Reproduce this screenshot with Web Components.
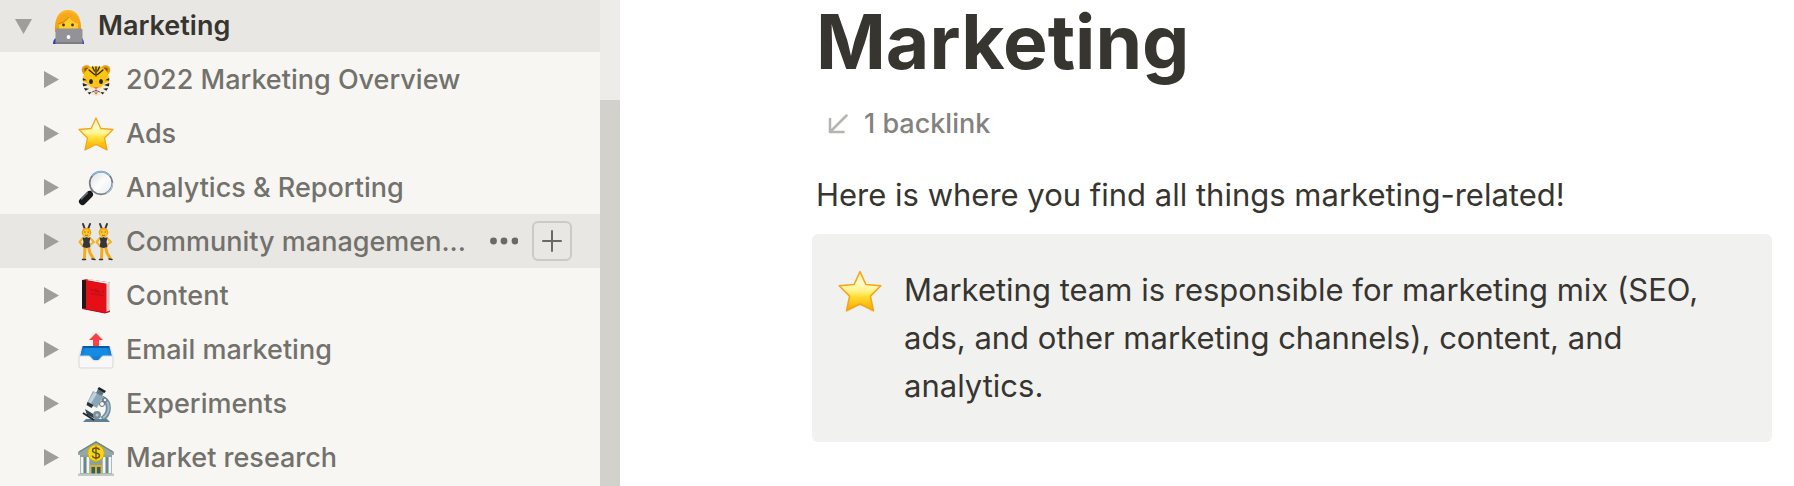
<!DOCTYPE html>
<html lang="en">
<head>
<meta charset="utf-8">
<meta name="viewport" content="width=device-width, initial-scale=1">
<title>Marketing</title>
<style>
  html, body { margin: 0; height: 100%; }
  body { font-family: Inter, "Liberation Sans", sans-serif; color: #37352f; background: #fff; }
</style>
</head>
<body>
<workspace-app>
  <side-bar slot="sidebar">
    <page-row top open icon="technologist">Marketing</page-row>
    <page-row icon="tiger">2022 Marketing Overview</page-row>
    <page-row icon="star">Ads</page-row>
    <page-row icon="magnifier">Analytics &amp; Reporting</page-row>
    <page-row icon="dancers" active>Community managemen...</page-row>
    <page-row icon="book">Content</page-row>
    <page-row icon="outbox">Email marketing</page-row>
    <page-row icon="microscope">Experiments</page-row>
    <page-row icon="bank">Market research</page-row>
  </side-bar>
  <page-document>
    <span slot="title">Marketing</span>
    <span slot="backlinks">1 backlink</span>
    <text-block>Here is where you find all things marketing-related!</text-block>
    <callout-block icon="star">Marketing team is responsible for marketing mix (SEO, ads, and other marketing channels), content, and analytics.</callout-block>
  </page-document>
</workspace-app>

<script>
const art = {
  technologist: `
    <defs><linearGradient id="h" x1="0" y1="0" x2="0" y2="1"><stop offset="0" stop-color="#fdb827"/><stop offset="1" stop-color="#ef9a0c"/></linearGradient></defs>
    <path d="M5 24C4 10 9 2 18 2s14 8 13 22z" fill="url(#h)"/>
    <path d="M3 36c0-3 1-5 3-6h26c1 1 2 3 2 6z" fill="#2b39c4"/>
    <path d="M9 16c5-1 9-4 10-7 2 3 5 5 9 6v8H9z" fill="#ffcf2e"/>
    <path d="M8 17c5-1 9-4 11-8 2 3 5 6 10 7-1-6-4-11-11-11S7 9 8 17z" fill="#f6a81a"/>
    <path d="M19 9q-5 6-11 7" stroke="#c97d08" stroke-width=".8" fill="none"/>
    <circle cx="13.500" cy="17" r="1.400" fill="#503008"/><circle cx="22.500" cy="17" r="1.400" fill="#503008"/>
    <rect x="5.500" y="20.500" width="27" height="15.500" rx="1.500" fill="#929297"/><path d="M5.500 34h27v2h-27z" fill="#7c7c82"/>
    <circle cx="18.500" cy="29" r="1.900" fill="#fff"/>`,
  tiger: `
    <circle cx="8.500" cy="9" r="4.800" fill="#e89b10"/><circle cx="27.500" cy="9" r="4.800" fill="#e89b10"/>
    <circle cx="8.500" cy="9" r="2.400" fill="#8a5a10"/><circle cx="27.500" cy="9" r="2.400" fill="#8a5a10"/>
    <path d="M18 5c8 0 12 5 13 12 1 9-5 17-13 17S4 26 5 17C6 10 10 5 18 5z" fill="#fcc413"/>
    <path d="M4.700 21c4 0 6 3 8.500 5.500l4.800.5 4.800-.5c2.500-2.500 4.500-5.500 8.500-5.500 0 6-4 10-7.500 12L18 35.500 12.200 33c-3.500-2-7.500-6-7.500-12z" fill="#f3ead8"/>
    <path d="M18 6v9M14.500 6l2 4M21.500 6l-2 4M11 9l5.500 4.500M25 9l-5.500 4.500" stroke="#2a2410" stroke-width="1.300" fill="none" stroke-linecap="round"/>
    <path d="M4.800 17l4.200 2.200-4.200.3zM4.600 22l5.400 2-4.800 1.500zM6 27l5 .8-3.600 2zM9.500 31.500l4-.5-2 2.500zM31.200 17L27 19.200l4.200.3zM31.400 22L26 24l4.800 1.500zM30 27l-5 .8 3.600 2zM26.500 31.500l-4-.5 2 2.500z" fill="#222"/>
    <ellipse cx="13" cy="20.500" rx="1.900" ry="2.500" fill="#222"/><ellipse cx="23" cy="20.500" rx="1.900" ry="2.500" fill="#222"/>
    <path d="M15.500 26h5L18 28.800z" fill="#e8707f"/><path d="M14 31q4-3 8 0M18 29v1.500" stroke="#554" stroke-width=".9" fill="none"/><path d="M16 31.500h4l-2 2z" fill="#d84a54"/>`,
  star: `
    <defs><linearGradient id="s" x1="0" y1="0" x2="0" y2="1"><stop offset="0" stop-color="#fff3b0"/><stop offset=".3" stop-color="#fffbc4"/><stop offset=".48" stop-color="#fff48e"/><stop offset=".65" stop-color="#ffdc2e"/><stop offset="1" stop-color="#fca500"/></linearGradient></defs>
    <path d="M18 3l4.800 10.500L35 14.500l-8.500 8.500L29 35l-11-5.500L7 35l2.500-12L1 14.500l12.200-1z" fill="url(#s)" stroke="#f6a519" stroke-width="1.300" stroke-linejoin="round"/>`,
  magnifier: `
    <defs><linearGradient id="m" x1="0" y1="0" x2="1" y2="1"><stop offset="0" stop-color="#dcdcdd"/><stop offset=".5" stop-color="#fdfdfd"/><stop offset="1" stop-color="#e6e8ea"/></linearGradient></defs>
    <path d="M12 24l4-4" stroke="#8b9094" stroke-width="3"/>
    <path d="M4.500 32.500l7-7" stroke="#17191b" stroke-width="7" stroke-linecap="round"/><path d="M3.500 30l6-6" stroke="#717679" stroke-width="1.300" stroke-linecap="round"/>
    <circle cx="23" cy="14" r="11.300" fill="url(#m)" stroke="#777d85" stroke-width="1.700"/>
    <path d="M14 6.500A12 12 0 0 1 32 7" stroke="#8db9e8" stroke-width="1.500" fill="none"/><path d="M34.500 14A11.500 11.500 0 0 1 28 24.500" stroke="#a9bfd8" stroke-width="1.300" fill="none"/>`,
  dancers: `
    <g id="d"><path d="M5 1l1.500 4M12 1l-1.500 4" stroke="#33363d" stroke-width="2" stroke-linecap="round"/>
    <circle cx="8.500" cy="9.500" r="4.800" fill="#efa012"/><ellipse cx="8.500" cy="10" rx="3.500" ry="3.800" fill="#ffc629"/>
    <path d="M6 9h1.500M9.500 9H11M7 12q1.500 1 3 0" stroke="#a0620e" stroke-width=".9" fill="none"/>
    <path d="M5 15l-3.500 4 3.500 4M12 15l4 4-4 3" stroke="#f5b21c" stroke-width="2" fill="none" stroke-linejoin="round"/>
    <path d="M7 24L6.500 35M10.500 24l1.500 6 3 5" stroke="#f5aa18" stroke-width="3" fill="none" stroke-linecap="round"/>
    <path d="M4.500 14q2 1.500 4 0 2 1.500 4 0l-1 5 1 5-4 1-4-1 1-5z" fill="#35363c"/>
    <path d="M4.500 36.500h3M14 36l3 .5" stroke="#333" stroke-width="1.500" stroke-linecap="round"/></g><use href="#d" x="17"/>`,
  book: `
    <path d="M4 3l5-1 23 3.500v29L27 36 4 31.500z" fill="#a5131a"/>
    <path d="M8 3l3-1 21 3.500-2.500 1.500z" fill="#ece9e6"/><path d="M28 6.500l4-1v28l-4 1.500z" fill="#dedad8"/><path d="M30 7v26" stroke="#a9a5a3" stroke-width=".7"/>
    <path d="M4 3l4 .6V32l-4-1z" fill="#241617"/><path d="M8 3.600L28.500 7v29L8 32z" fill="#e50f17"/>
    <path d="M12 11.500l2 2.500 1.500-2M17 12.500l2 .5v2h-2zM20.500 13v2.500h2M25 13.500v3M12.500 16.500l13 2" stroke="#9e1117" stroke-width=".7" fill="none"/><path d="M4 31.500L27 36l5-1.500" stroke="#b80f18" fill="none"/>`,
  outbox: `
    <path d="M4 15h28l2 10v4H2v-4z" fill="#177ed2"/><path d="M4 15h28l1 6-2-4H5l-2 4z" fill="#0759a3"/><path d="M7 17h22l2 8H5z" fill="#168be4"/>
    <path d="M18 2l7 7h-4v6h-6V9h-4z" fill="#fb3f48"/>
    <path d="M1 25h10c2 0 3 5 7 5s5-5 7-5h10v10q0 2-2 2H3q-2 0-2-2z" fill="#f8f8f8" stroke="#d7d7d7"/><path d="M1 25l3-10M35 25l-3-10" stroke="#e7e7e7" stroke-width="1.500"/>`,
  microscope: `
    <path d="M24 13c9 4 8 16 0 21" stroke="#708b9d" stroke-width="5" fill="none"/><path d="M25 13c8 5 7 15 0 20" stroke="#a6bdca" stroke-width="2" fill="none"/>
    <path d="M5 37l3-3h21l3 3z" fill="#5b8199"/><path d="M7 24l13 8-2 2-9-4z" fill="#35434d"/><path d="M5 28l11 7" stroke="#22282d" stroke-width="2"/>
    <circle cx="19" cy="30" r="4" fill="#78909e"/><circle cx="19" cy="30" r="1.500" fill="#bdc7cd"/>
    <path d="M15 6l10 5-6 12-10-5z" fill="#8ba6b6"/><path d="M16 7l3 1.500-6 10-3-1.500z" fill="#c2d2dc"/><path d="M20 4l6 3-2 4-6-3z" fill="#5d7483"/><path d="M21 2l7 4-1.500 2-7-4z" fill="#1d2429"/>
    <path d="M9.500 17l6 3-2 3-5-3z" fill="#293238"/><circle cx="24" cy="19" r="2.500" fill="#f4f6f7" stroke="#62727c"/><circle cx="27" cy="15" r="2" fill="#edf0f2" stroke="#53616a"/>`,
  bank: `
    <path d="M0 13L18 2l18 11v3H0z" fill="#93a9a8"/><path d="M1 13L18 3l17 10" stroke="#6f8685" fill="none" stroke-width="1.300"/>
    <path d="M2 16h32v19H2z" fill="#8ba2a0"/><path d="M4 18v16M10 18v16M26 18v16M32 18v16" stroke="#f3f6f5" stroke-width="2.600"/><path d="M7 18v16M29 18v16" stroke="#657e7f" stroke-width="1.500"/>
    <path d="M12 26h12v9H12z" fill="#d8b128"/><path d="M13.500 28h3.500v7h-3.500zM19 28h3.500v7H19z" fill="#315d70"/><path d="M0 34.500h36V37H0z" fill="#bdc9c7"/>
    <circle cx="18" cy="14" r="8.300" fill="#f9d51a" stroke="#d8a70e"/>
    <path d="M21.500 11c-.5-1.500-1.800-2-3.500-2-2 0-3.500 1-3.500 2.500 0 3.500 7 1.500 7 5 0 1.500-1.500 2.500-3.500 2.500s-3.300-1-3.700-2.400M18 7.500v13" stroke="#6c5503" stroke-width="1.400" fill="none"/>`
};

class Element extends HTMLElement {
  connectedCallback() {
    if (this.shadowRoot) return;
    this.attachShadow({ mode: "open" }).innerHTML = this.view();
  }
}

customElements.define("emoji-icon", class extends Element {
  view() {
    return `<style>
      :host { display: block; flex: none; width: 36px; height: 36px; }
      svg { display: block; width: 100%; height: 100%; overflow: visible; }
    </style><svg viewBox="0 0 36 36" aria-hidden="true">${art[this.getAttribute("name")]}</svg>`;
  }
});

customElements.define("page-row", class extends Element {
  view() {
    const open = this.hasAttribute("open");
    const points = open ? "3,5 20,5 11.500,20" : "4,4 19,12.500 4,21";
    const actions = this.hasAttribute("active") ? `<div class="actions">
        <button class="more" aria-label="More options"><svg width="28" height="8" viewBox="0 0 28 8" fill="#6a6964"><circle cx="3.500" cy="4" r="3.400"/><circle cx="14" cy="4" r="3.400"/><circle cx="25" cy="4" r="3.400"/></svg></button>
        <button class="add" aria-label="Add a page inside"><svg width="20" height="22" viewBox="0 0 20 22" stroke="#6a6964" stroke-width="2" stroke-linecap="round"><path d="M1 11h18M10 1v20"/></svg></button>
      </div>` : "";
    return `<style>
      :host { display: flex; align-items: center; box-sizing: border-box; height: 54px; padding: 0 28px 0 40px; color: #72716c; font-size: 27px; font-weight: 500; line-height: 36px; }
      :host([top]) { height: 52px; padding-left: 12px; color: #37352f; font-weight: 600; background: #e8e7e4; }
      :host([active]) { background: #e8e7e4; }
      button { display: grid; place-items: center; margin: 0; padding: 0; border: 0; background: none; cursor: pointer; }
      .toggle { flex: none; width: 24px; height: 24px; margin-right: 14px; }
      a { display: flex; align-items: center; gap: 12px; flex: 1; min-width: 0; color: inherit; text-decoration: none; }
      .label { white-space: nowrap; padding-top: 2px; }
      :host([top]) .label { padding-top: 0; }
      .actions { display: flex; align-items: center; gap: 14px; }
      .add { box-sizing: border-box; width: 40px; height: 40px; border: 2px solid #cbcac7; border-radius: 6px; }
      svg { display: block; }
    </style>
    <button class="toggle" aria-label="Toggle subpages" aria-expanded="${open}"><svg width="24" height="24" viewBox="0 0 24 24"><polygon points="${points}" fill="#9f9e9a"/></svg></button>
    <a href="#"><emoji-icon name="${this.getAttribute("icon")}"></emoji-icon><span class="label"><slot></slot></span></a>${actions}`;
  }
});

customElements.define("side-bar", class extends Element {
  view() {
    return `<style>
      :host { display: grid; grid-template-columns: 1fr 20px; height: 100%; overflow: hidden; background: #f7f6f3; }
      nav { min-width: 0; overflow: hidden; }
      .track { padding-top: 100px; box-sizing: border-box; background: #edece9; }
      .thumb { height: 100%; background: #d3d1cb; }
    </style><nav aria-label="Pages"><slot></slot></nav><div class="track"><div class="thumb"></div></div>`;
  }
});

customElements.define("text-block", class extends Element {
  view() {
    return `<style>
      :host { display: block; padding: 0 4px; font-size: 31px; line-height: 48px; }
      p { margin: 0; }
    </style><p><slot></slot></p>`;
  }
});

customElements.define("callout-block", class extends Element {
  view() {
    return `<style>
      :host { display: flex; gap: 22px; margin-top: 15px; padding: 32px 60px 32px 26px; border-radius: 6px; background: #f1f1ef; font-size: 31px; line-height: 48px; }
      emoji-icon { width: 44px; height: 44px; margin-top: 2px; }
      p { margin: 0; flex: 1; min-width: 0; }
    </style><emoji-icon name="${this.getAttribute("icon")}"></emoji-icon><p><slot></slot></p>`;
  }
});

customElements.define("page-document", class extends Element {
  view() {
    return `<style>
      :host { display: block; min-width: 0; padding: 0 22px 0 192px; }
      h1 { margin: 0; padding: 0 4px; font-size: 75px; font-weight: 700; line-height: 84px; }
      button { display: flex; align-items: center; gap: 16px; margin: 21px 0 28px; padding: 0 16px; border: 0; background: none; color: #83827e; font: inherit; font-size: 27px; font-weight: 500; line-height: 38px; cursor: pointer; }
      svg { display: block; }
    </style>
    <h1><slot name="title"></slot></h1>
    <button><svg width="20" height="20" viewBox="0 0 20 20" fill="none" stroke="#b5b4b1" stroke-width="2.500" stroke-linecap="round" stroke-linejoin="round"><path d="M18.500 1.500L2 18M2 5v13h13.500"/></svg><slot name="backlinks"></slot></button>
    <slot></slot>`;
  }
});

customElements.define("workspace-app", class extends Element {
  view() {
    return `<style>
      :host { display: grid; grid-template-columns: 620px minmax(0, 1fr); height: 100%; }
      main { min-width: 0; }
    </style><slot name="sidebar"></slot><main><slot></slot></main>`;
  }
});
</script>
</body>
</html>
